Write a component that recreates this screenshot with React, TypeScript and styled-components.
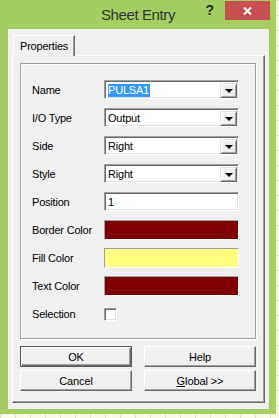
import React from "react";
import styled, { createGlobalStyle, css } from "styled-components";

const GlobalStyle = createGlobalStyle`
  html, body {
    margin: 0;
    padding: 0;
  }

  body {
    width: 279px;
    height: 418px;
    overflow: hidden;
    background-color: #fbf8e5;
    background-image:
      linear-gradient(to right, #dcdccc 1px, transparent 1px),
      linear-gradient(to bottom, #dcdccc 1px, transparent 1px);
    background-size: 15px 15px;
    font-family: "Liberation Sans", Arial, sans-serif;
  }
`;

const Window = styled.div`
  width: 276px;
  height: 414px;
  box-sizing: border-box;
  background: #a4cd62;
  display: flex;
  flex-direction: column;
  padding: 0 7px 5px 8px;
`;

const TitleBar = styled.div`
  height: 29px;
  margin: 0 -7px 0 -8px;
  display: grid;
  grid-template-columns: 1fr auto 1fr;
  align-items: center;
`;

const Title = styled.div`
  grid-column: 2;
  font-size: 15px;
  letter-spacing: -0.4px;
  color: #333;
  padding-bottom: 1px;
`;

const Controls = styled.div`
  grid-column: 3;
  align-self: start;
  display: flex;
  justify-content: flex-end;
  align-items: flex-start;
  gap: 11px;
  padding: 1px 6px 0 0;
`;

const HelpMark = styled.span`
  font-size: 14px;
  font-weight: bold;
  color: #2b2b2b;
  line-height: 19px;
`;

const CloseButton = styled.div`
  width: 45px;
  height: 19px;
  background: #c75050;
  display: flex;
  align-items: center;
  justify-content: center;
`;

const Client = styled.div`
  flex: 1;
  background: #f0f0f0;
  display: flex;
  flex-direction: column;
  padding: 6px 4px 6px 4px;
`;

const TabStrip = styled.div`
  display: flex;
  padding-left: 1px;
`;

const Tab = styled.div`
  position: relative;
  z-index: 1;
  height: 21px;
  margin-bottom: -1px;
  box-sizing: border-box;
  padding: 4px 0 0 6px;
  width: 62px;
  background: #f0f0f0;
  border-top: 1px solid #fff;
  border-left: 1px solid #fff;
  border-right: 1px solid #696969;
  box-shadow: inset -1px 0 0 #a0a0a0;
  font-size: 11px;
  letter-spacing: -0.2px;
  color: #000;
`;

const TabPage = styled.div`
  flex: 1;
  border: 1px solid;
  border-color: #fff #696969 #696969 #fff;
  box-shadow: inset -1px -1px 0 #a0a0a0;
  padding: 7px 7px 10px 7px;
  display: flex;
  flex-direction: column;
`;

const GroupBox = styled.div`
  width: 236px;
  height: 276px;
  box-sizing: border-box;
  border: 1px solid #a0a0a0;
  box-shadow: inset 1px 1px 0 #fff, 1px 1px 0 #fff;
  padding: 16px 0 0 11px;
`;

const FieldGrid = styled.div`
  display: grid;
  grid-template-columns: 72px 135px;
  grid-auto-rows: 20px;
  row-gap: 8px;
  align-items: center;
`;

const Label = styled.span`
  font-size: 11px;
  letter-spacing: -0.2px;
  color: #000;
`;

const sunken = css`
  box-sizing: border-box;
  border: 1px solid;
  border-color: #a0a0a0 #fff #fff #a0a0a0;
  box-shadow: inset 1px 1px 0 #696969, inset -1px -1px 0 #e3e3e3;
`;

const Combo = styled.div`
  ${sunken};
  align-self: start;
  height: 19px;
  background: #fff;
  display: flex;
  align-items: center;
  padding: 2px 1px 1px 2px;
`;

const ComboText = styled.span`
  flex: 1;
  font-size: 11px;
  letter-spacing: -0.2px;
  color: #000;
  padding-left: 1px;
`;

const Selected = styled.span`
  background: #3399ff;
  color: #fff;
  line-height: 13px;
  display: inline-block;
  padding: 0 1px 0 0;
`;

const DropButton = styled.div`
  width: 17px;
  height: 15px;
  box-sizing: border-box;
  background: #f0f0f0;
  border: 1px solid;
  border-color: #e3e3e3 #696969 #696969 #e3e3e3;
  box-shadow: inset 1px 1px 0 #fff, inset -1px -1px 0 #a0a0a0;
  display: flex;
  align-items: center;
  justify-content: center;
`;

const Arrow = styled.span`
  width: 0;
  height: 0;
  border-left: 4px solid transparent;
  border-right: 4px solid transparent;
  border-top: 4px solid #000;
  margin-top: 1px;
`;

const TextBox = styled.div`
  ${sunken};
  align-self: start;
  height: 19px;
  background: #fff;
  font-size: 11px;
  color: #000;
  padding: 3px 0 0 3px;
`;

const Swatch = styled.div<{ $color: string }>`
  ${sunken};
  height: 20px;
  background: ${(p) => p.$color};
  box-shadow: none;
  border-color: #a0a0a0 #fff #fff #a0a0a0;
`;

const CheckBox = styled.div`
  ${sunken};
  width: 13px;
  height: 13px;
  background: #fff;
`;

const ButtonGrid = styled.div`
  margin-top: 7px;
  display: grid;
  grid-template-columns: 112px 112px;
  column-gap: 12px;
  row-gap: 3px;
`;

const Button = styled.div<{ $default?: boolean }>`
  height: 21px;
  box-sizing: border-box;
  background: #f0f0f0;
  border: 1px solid;
  border-color: #fff #696969 #696969 #fff;
  box-shadow: inset -1px -1px 0 #a0a0a0;
  display: flex;
  align-items: center;
  justify-content: center;
  font-size: 11px;
  letter-spacing: -0.1px;
  color: #000;

  ${(p) =>
    p.$default &&
    css`
      border-color: #5a5a5a;
      box-shadow: inset 1px 1px 0 #fff, inset -1px -1px 0 #696969,
        inset -2px -2px 0 #a0a0a0;
    `}
`;

const Key = styled.span`
  text-decoration: underline;
`;

const ComboField = ({ value, selected }: { value: string; selected?: boolean }) => (
  <Combo>
    <ComboText>{selected ? <Selected>{value}</Selected> : value}</ComboText>
    <DropButton>
      <Arrow />
    </DropButton>
  </Combo>
);

const App = () => {
  return (
    <>
      <GlobalStyle />
      <Window>
        <TitleBar>
          <Title>Sheet Entry</Title>
          <Controls>
            <HelpMark>?</HelpMark>
            <CloseButton>
              <svg width="9" height="8" viewBox="0 0 9 8">
                <path d="M1 0.5 L8 7.5 M8 0.5 L1 7.5" stroke="#fff" strokeWidth="2" />
              </svg>
            </CloseButton>
          </Controls>
        </TitleBar>

        <Client>
          <TabStrip>
            <Tab>Properties</Tab>
          </TabStrip>
          <TabPage>
            <GroupBox>
              <FieldGrid>
                <Label>Name</Label>
                <ComboField value="PULSA1" selected />
                <Label>I/O Type</Label>
                <ComboField value="Output" />
                <Label>Side</Label>
                <ComboField value="Right" />
                <Label>Style</Label>
                <ComboField value="Right" />
                <Label>Position</Label>
                <TextBox>1</TextBox>
                <Label>Border Color</Label>
                <Swatch $color="#800000" />
                <Label>Fill Color</Label>
                <Swatch $color="#ffff80" />
                <Label>Text Color</Label>
                <Swatch $color="#800000" />
                <Label>Selection</Label>
                <CheckBox />
              </FieldGrid>
            </GroupBox>

            <ButtonGrid>
              <Button $default>OK</Button>
              <Button>Help</Button>
              <Button>Cancel</Button>
              <Button>
                <Key>G</Key>lobal &gt;&gt;
              </Button>
            </ButtonGrid>
          </TabPage>
        </Client>
      </Window>
    </>
  );
};

export default App;
